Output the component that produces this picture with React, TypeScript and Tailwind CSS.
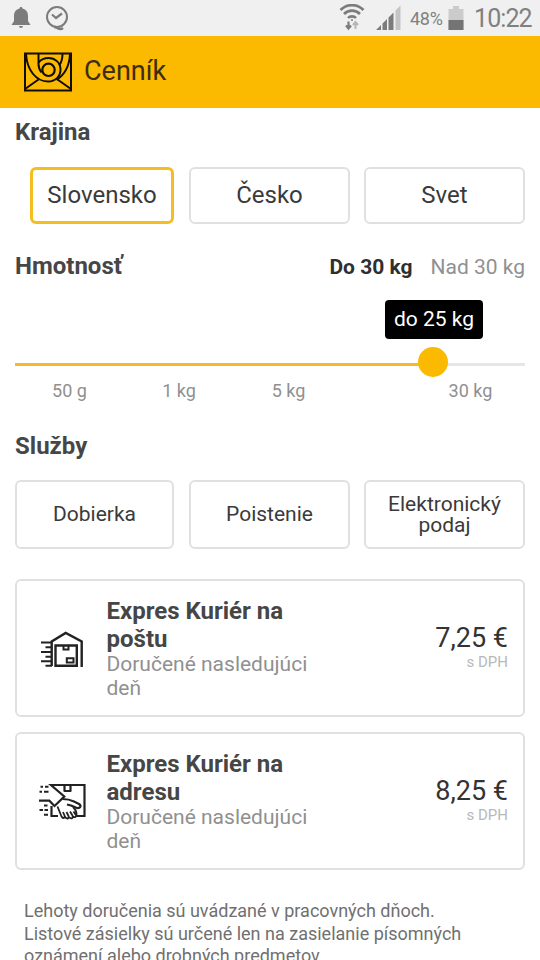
import type { ReactNode } from "react";

function PostLogo() {
  return (
    <svg width="48" height="40" viewBox="0 0 48 40" fill="none" stroke="#120c00" strokeWidth="2">
      <rect x="1" y="1.500" width="46" height="37" />
      <path d="M2 2C3 18 12 29.500 24 29.500C31.500 29.500 36.500 24.500 36.500 17.500C36.500 10.500 31 6 24.500 6C20.500 6 17 7.500 14.500 10.500" />
      <path d="M14.500 2V12C14.500 15 15.500 18 17.500 20.500" />
      <circle cx="24.500" cy="17.800" r="6.200" strokeWidth="2.200" />
      <path d="M1 37L14.500 27.500M47 37L33.500 27.500" />
      <path d="M46 2C45.500 14 40 23 32.500 28M38.500 2C38.500 7 37.500 10 35.500 13" />
    </svg>
  );
}

function HouseIcon() {
  return (
    <svg width="44" height="38" viewBox="0 0 44 38" fill="none" stroke="#222" strokeWidth="2.400">
      <path d="M11.700 37V12.500L25.700 4L41.700 12.500V38" />
      <path d="M15.500 16.500H36.800V36.700H15.500Z" />
      <path d="M23.500 16.500V20.500H28.500V16.500M26.800 29.300H33.500V33.500H26.800Z" strokeWidth="2" />
      <path d="M1 13.500H11M5.500 18.300H11M1 23H11M5.500 27.700H11M1 32.300H11M5.500 36.700H12" strokeWidth="2" />
    </svg>
  );
}

function HandIcon() {
  return (
    <svg width="48" height="38" viewBox="0 0 48 38" fill="none" stroke="#222" strokeWidth="2.200" strokeLinejoin="round">
      <path d="M39 34H46.500V3H13L26.300 14.500L16.500 24L11.300 18.700H1M13.500 24V34H20" strokeLinejoin="miter" />
      <path d="M26.500 3V9H32.500V3" />
      <path d="M24.500 17C30 17 33 18 36 19.500L41 22C44 24 42 26.500 39 26L33 23.500L29 22.500" />
      <path d="M35 25C38 28 39 31 38.500 34L35.500 29.500M19.500 24.500L23.500 34.500C25 37 27.500 36 26.500 33.500L25 30M26.800 34.500C28.500 37.500 31.500 37 30.500 34L28.500 30M30.800 35C33 37.500 35.500 36.500 34.500 33.500L32 29.500M34.700 34.500C37 36 39 34.500 38.500 32" strokeWidth="1.800" />
      <path d="M2.500 4.700H5M7 4.700H10.500M1.500 9.700H4M6 9.700H10.500M6 23.500H9.500M1.500 28H5M6.500 28H10M6 32.700H10" strokeWidth="2" />
    </svg>
  );
}

function StatusBar() {
  return (
    <div className="flex h-9 items-center bg-[#f0f0f0] text-[#808080]">
      <svg className="ml-[11px] shrink-0" width="20" height="24" viewBox="0 0 20 24" fill="#7c7c7c">
        <path d="M10 1C11 1 11.500 1.600 11.500 2.500C15 3.300 17 6 17 10V15L19.500 19H.5L3 15V10C3 6 5 3.300 8.500 2.500C8.500 1.600 9 1 10 1ZM8 20H12C12 22.500 8 22.500 8 20Z" />
      </svg>
      <svg className="ml-[14px] shrink-0" width="24" height="25" viewBox="0 0 24 25" fill="none" stroke="#7c7c7c" strokeWidth="2">
        <circle cx="12" cy="11" r="10" />
        <path d="M7 8.500L11 12L17 7.500" strokeWidth="2.200" />
        <path d="M9 21C13 21 14 25 18 22" strokeWidth="2.500" />
      </svg>
      <svg className="ml-[270px] shrink-0" width="26" height="28" viewBox="0 0 26 28" fill="none" stroke="#7c7c7c" strokeWidth="2.600">
        <path d="M1.500 6C8 -.5 18 -.5 24.500 6M5 10C9.500 5.500 16.500 5.500 21 10M9 14C11 11.800 15 11.800 17 14" />
        <circle cx="13" cy="16" r="1" fill="#7c7c7c" stroke="none" />
        <path d="M9.500 17.500V24M7 21.500L9.500 24.500L12 21.500" strokeWidth="2.200" />
        <path d="M16.500 25V18.500M14 21L16.500 18L19 21" stroke="#b5b5b5" strokeWidth="2" />
      </svg>
      <svg className="ml-[11px] shrink-0" width="25" height="26" viewBox="0 0 25 26" fill="#7c7c7c">
        <path d="M0 25L5 20V25ZM6.500 18.500L11 14V25H6.500ZM12.500 12.500L17.500 7.500V25H12.500Z" />
        <path d="M19.500 5.500L24.500 .5V25H19.500Z" fill="#c4c4c4" />
      </svg>
      <span className="ml-[9px] w-[34px] whitespace-nowrap text-[18px] tracking-[-0.3px]">48%</span>
      <svg className="ml-1 shrink-0" width="16" height="24" viewBox="0 0 16 24">
        <path d="M5 0H11V3H15.500V24H.5V3H5Z" fill="#cbcbcb" />
        <path d="M.5 14H15.500V24H.5Z" fill="#747474" />
      </svg>
      <span className="ml-[10px] whitespace-nowrap pt-[2px] text-[25px] tracking-[-0.900px]">10:22</span>
    </div>
  );
}

function Choice({ children, className }: { children: ReactNode; className: string }) {
  return (
    <button className={`flex items-center justify-center rounded-md bg-white text-center text-[#3a3a3a] ${className}`}>
      {children}
    </button>
  );
}

function Offer({ icon, place, price }: { icon: ReactNode; place: string; price: string }) {
  return (
    <article className="flex h-[138px] items-center rounded-md border-2 border-[#e0e0e0] pr-[15px]">
      <div className="flex w-[90px] shrink-0 justify-center">{icon}</div>
      <div className="-ml-[0.5px] w-[230px] pt-px">
        <h3 className="text-[24px] font-bold leading-[28px] text-[#464646]">Expres Kuriér na<br />{place}</h3>
        <p className="-mt-px text-[21px] leading-[24px] text-[#909090]">Doručené nasledujúci<br />deň</p>
      </div>
      <div className="ml-auto text-right">
        <div className="text-[27px] leading-[30px] text-[#333]">{price} €</div>
        <div className="-mt-px pb-px text-[15px] leading-[20px] text-[#b8b8b8]">s DPH</div>
      </div>
    </article>
  );
}

export default function App() {
  return (
    <div className="h-[960px] w-[540px] overflow-hidden bg-white font-['Roboto',sans-serif]">
      <StatusBar />
      <header className="flex h-[72px] items-center bg-[#fbba00] pl-6 text-[27px] text-[#402c12]">
        <PostLogo />
        <h1 className="ml-3 pb-[2px]">Cenník</h1>
      </header>
      <main className="px-[15px]">
        <h2 className="flex h-[59px] items-start pt-[9px] text-[24px] font-bold leading-[30px] text-[#464646]">Krajina</h2>
        <div className="flex h-[57px] pl-[15px] text-[24px]">
          <Choice className="w-[144px] border-[3px] border-[#f5bd20] pb-[2px]">Slovensko</Choice>
          <Choice className="ml-[15px] w-[161px] border-2 border-[#e0e0e0] pb-[2px]">Česko</Choice>
          <Choice className="ml-[14px] w-[161px] border-2 border-[#e0e0e0] pb-[2px]">Svet</Choice>
        </div>
        <div className="mt-[27px] flex h-[30px] items-center whitespace-nowrap">
          <h2 className="text-[24px] font-bold text-[#464646]">Hmotnosť</h2>
          <span className="ml-auto pt-[3px] text-[21px] font-bold text-[#2f2f2f]">Do 30 kg</span>
          <span className="ml-[18px] pt-[3px] text-[21px] text-[#909090]">Nad 30 kg</span>
        </div>
        <div className="relative mt-[19px] h-[78px]">
          <div className="flex pt-[63px]">
            <div className="h-[3px] w-[418px] bg-[#f8b926]" />
            <div className="h-[3px] flex-1 bg-[#e6e6e6]" />
          </div>
          <div className="absolute left-[370px] top-0 flex h-[39px] w-[98px] items-center justify-center rounded-[4px] bg-black text-[21px] text-white">do 25 kg</div>
          <div className="absolute left-[403px] top-[47px] size-[30px] rounded-full bg-[#fbba00]" />
        </div>
        <div className="flex h-[26px] items-center pb-[2px] text-center text-[18px] text-[#909090]">
          <span className="w-[109px]">50 g</span>
          <span className="w-[110px]">1 kg</span>
          <span className="w-[109px]">5 kg</span>
          <span className="ml-[73px] w-[109px]">30 kg</span>
        </div>
        <h2 className="mt-[27px] h-[49px] text-[24px] font-bold leading-[30px] text-[#464646]">Služby</h2>
        <div className="flex h-[69px] text-[21px] leading-[21px]">
          <Choice className="w-[159px] border-2 border-[#e0e0e0]">Dobierka</Choice>
          <Choice className="ml-[15px] w-[161px] border-2 border-[#e0e0e0]">Poistenie</Choice>
          <Choice className="ml-[14px] w-[161px] border-2 border-[#e0e0e0]">Elektronický<br />podaj</Choice>
        </div>
        <div className="mt-[30px] flex flex-col gap-[15px]">
          <Offer icon={<HouseIcon />} place="poštu" price="7,25" />
          <Offer icon={<HandIcon />} place="adresu" price="8,25" />
        </div>
        <p className="ml-[9px] mt-[30px] whitespace-nowrap text-[18px] leading-[22.600px] text-[#707070]">
          Lehoty doručenia sú uvádzané v pracovných dňoch.<br />
          Listové zásielky sú určené len na zasielanie písomných<br />
          oznámení alebo drobných predmetov.
        </p>
      </main>
    </div>
  );
}
